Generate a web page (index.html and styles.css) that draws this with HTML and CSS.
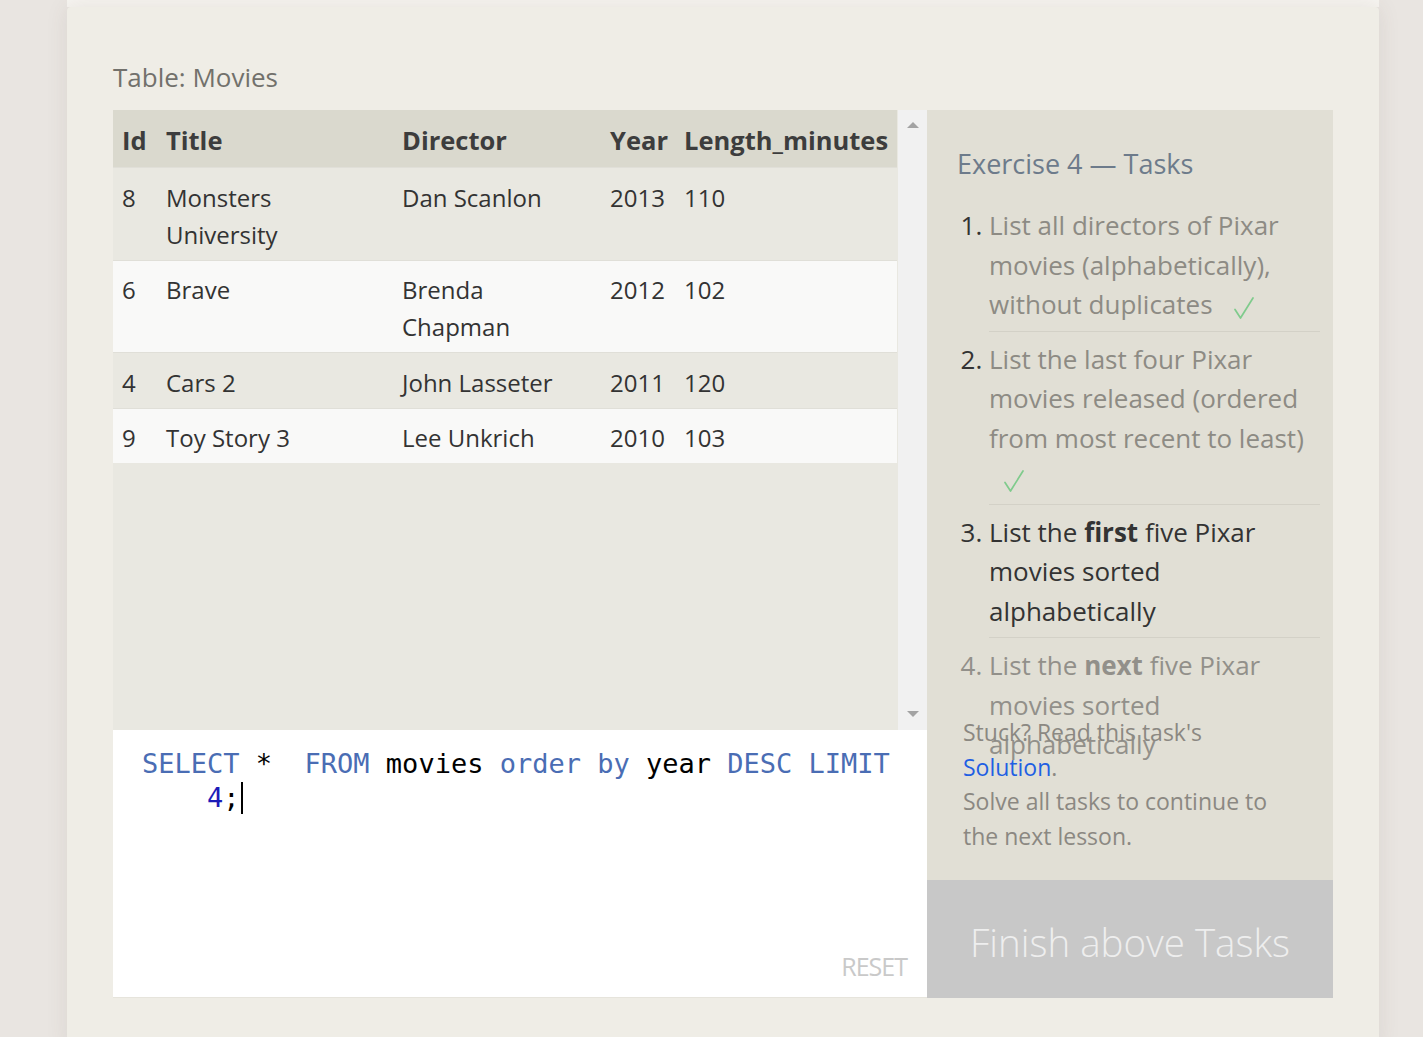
FILE: index.html
```html
<!DOCTYPE html>
<html lang="en">
<head>
<meta charset="utf-8">
<title>SQL Lesson - Exercise 4</title>
<link rel="stylesheet" href="styles.css">
</head>
<body>
<div class="page">
  <div class="topstrip"></div>
  <main class="panel">
    <h2 class="table-title">Table: Movies</h2>
    <div class="workspace">
      <div class="left">
        <div class="results">
          <div class="table-scroll">
            <table class="movies">
              <colgroup>
                <col class="c-id"><col class="c-title"><col class="c-dir"><col class="c-year"><col class="c-len">
              </colgroup>
              <thead>
                <tr><th>Id</th><th>Title</th><th>Director</th><th>Year</th><th>Length_minutes</th></tr>
              </thead>
              <tbody>
                <tr><td>8</td><td>Monsters University</td><td>Dan Scanlon</td><td>2013</td><td>110</td></tr>
                <tr><td>6</td><td>Brave</td><td>Brenda Chapman</td><td>2012</td><td>102</td></tr>
                <tr><td>4</td><td>Cars 2</td><td>John Lasseter</td><td>2011</td><td>120</td></tr>
                <tr><td>9</td><td>Toy Story 3</td><td>Lee Unkrich</td><td>2010</td><td>103</td></tr>
              </tbody>
            </table>
          </div>
          <div class="scrollbar"><span class="arrow up"></span><span class="arrow down"></span></div>
        </div>
        <div class="editor">
          <div class="code">
            <div class="line"><span class="kw">SELECT</span> *  <span class="kw">FROM</span> movies <span class="kw">order</span> <span class="kw">by</span> year <span class="kw">DESC</span> <span class="kw">LIMIT</span></div>
            <div class="line cont"><span class="num">4</span>;<span class="caret"></span></div>
          </div>
          <div class="reset">RESET</div>
        </div>
      </div>
      <div class="right">
        <div class="tasks-panel">
          <div class="tasks">
            <h3 class="tasks-title">Exercise 4 — Tasks</h3>
            <ol class="task-list">
              <li class="done"><span class="txt">List all directors of Pixar movies (alphabetically), without duplicates <svg class="check" width="20" height="22" viewBox="0 0 20 22"><polyline points="1,12.5 6.5,21 19,1" fill="none" stroke="#7fcb8c" stroke-width="1.7" stroke-linecap="round" stroke-linejoin="round"/></svg></span></li>
              <li class="done"><span class="txt">List the last four Pixar movies released (ordered from most recent to least) <svg class="check" width="20" height="22" viewBox="0 0 20 22"><polyline points="1,12.5 6.5,21 19,1" fill="none" stroke="#7fcb8c" stroke-width="1.7" stroke-linecap="round" stroke-linejoin="round"/></svg></span></li>
              <li class="current">List the <b>first</b> five Pixar movies sorted alphabetically</li>
              <li class="future">List the <b>next</b> five Pixar movies sorted alphabetically</li>
            </ol>
          </div>
          <p class="stuck">Stuck? Read this task's <a href="#" class="solution">Solution</a>.<br>Solve all tasks to continue to the next lesson.</p>
        </div>
        <div class="finish">Finish above Tasks</div>
      </div>
    </div>
  </main>
</div>
</body>
</html>
```

FILE: styles.css
```css
html, body {
  margin: 0;
  padding: 0;
}
body {
  background: #e9e5e1;
  font-family: "Open Sans", "Noto Sans", "Liberation Sans", sans-serif;
  color: #333;
  overflow: hidden;
}
.page {
  width: 1312px;
  margin-left: 67px;
}
.topstrip {
  height: 7px;
  background: #f6f4f0;
}
.panel {
  display: block;
  box-sizing: border-box;
  min-height: 1040px;
  background: #efede6;
  border-radius: 4px 4px 0 0;
  box-shadow: 0 0 22px rgba(90, 70, 60, 0.10);
  padding: 52px 46px 0 46px;
}
.table-title {
  margin: 0 0 15px 0;
  font-size: 26px;
  line-height: 36px;
  font-weight: 400;
  color: #72716c;
}
.workspace {
  display: grid;
  grid-template-columns: 814px 406px;
  height: 888px;
}
.left {
  display: flex;
  flex-direction: column;
}
.results {
  display: flex;
  height: 620px;
}
.table-scroll {
  flex: 1;
  background: #e9e8e1;
  overflow: hidden;
}
.movies {
  width: 784px;
  table-layout: fixed;
  border-collapse: collapse;
  font-size: 24px;
  line-height: 37px;
}
.c-id { width: 44px; }
.c-title { width: 236px; }
.c-dir { width: 208px; }
.c-year { width: 74px; }
.c-len { width: 222px; }
.movies th {
  background: #dad9ce;
  color: #3d3d3d;
  font-size: 25.5px;
  font-weight: 700;
  text-align: left;
  padding: 12px 0 8px 9px;
  white-space: nowrap;
  vertical-align: top;
}
.movies td {
  padding: 10.5px 9px 7px 9px;
  text-align: left;
  vertical-align: top;
  color: #333;
}
.movies tbody tr {
  border-top: 1px solid #e0dfd8;
}
.movies tbody tr:nth-child(odd) { background: #e9e8e1; }
.movies tbody tr:nth-child(even) { background: #f9f9f8; }
.scrollbar {
  width: 29px;
  background: #f1f1f1;
  display: flex;
  flex-direction: column;
  justify-content: space-between;
  align-items: center;
}
.arrow {
  width: 0;
  height: 0;
  border-left: 6px solid transparent;
  border-right: 6px solid transparent;
}
.arrow.up {
  margin-top: 12px;
  border-bottom: 6px solid #a3a3a3;
}
.arrow.down {
  margin-bottom: 13px;
  border-top: 6px solid #a3a3a3;
}
.editor {
  flex: 1;
  background: #fff;
  display: flex;
  flex-direction: column;
  border-bottom: 1px solid #e6e4dc;
}
.code {
  flex: 1;
  padding: 17px 0 0 29px;
  font-family: "DejaVu Sans Mono", "Liberation Mono", monospace;
  font-size: 27px;
  line-height: 34px;
  color: #000;
}
.line {
  white-space: pre;
}
.line.cont {
  padding-left: 65px;
}
.kw { color: #4a6db4; }
.num { color: #1c1cb8; }
.caret {
  display: inline-block;
  width: 2px;
  height: 32px;
  background: #000;
  vertical-align: -7px;
  margin-left: 1px;
}
.reset {
  align-self: flex-end;
  margin: 0 20px 16px 0;
  font-size: 25px;
  line-height: 30px;
  color: #c9c9c9;
  letter-spacing: -1px;
}
.right {
  display: flex;
  flex-direction: column;
}
.tasks-panel {
  flex: 1;
  background: #e1dfd5;
  padding: 35px 13px 0 30px;
}
.tasks {
  height: 570px;
}
.tasks-title {
  margin: 0;
  font-size: 27px;
  line-height: 38px;
  font-weight: 400;
  color: #6d7b8b;
}
.task-list {
  margin: 15px 0 0 0;
  padding: 0 0 0 32px;
  font-size: 26px;
  line-height: 39.5px;
}
.task-list li {
  padding: 8px 0 6px 0;
  border-bottom: 1px solid #d3d1c7;
}
.task-list li:last-child {
  border-bottom: none;
}
.task-list li.done { color: #333; }
.task-list li.done .txt { color: #8d8b84; }
.task-list li.current { color: #333; }
.task-list li.future { color: #92908a; }
.task-list b { font-weight: 700; }
.check {
  display: inline-block;
  margin-left: 15px;
  vertical-align: -5px;
}
.stuck {
  margin: 0 50px 0 6px;
  font-size: 23px;
  line-height: 34.7px;
  color: #8b8882;
}
.solution {
  color: #1f5fe3;
  text-decoration: none;
}
.finish {
  height: 118px;
  box-sizing: border-box;
  padding-top: 5px;
  background: #c8c8c8;
  color: #eeeeee;
  font-size: 38.5px;
  font-weight: 300;
  display: flex;
  align-items: center;
  justify-content: center;
}
```
